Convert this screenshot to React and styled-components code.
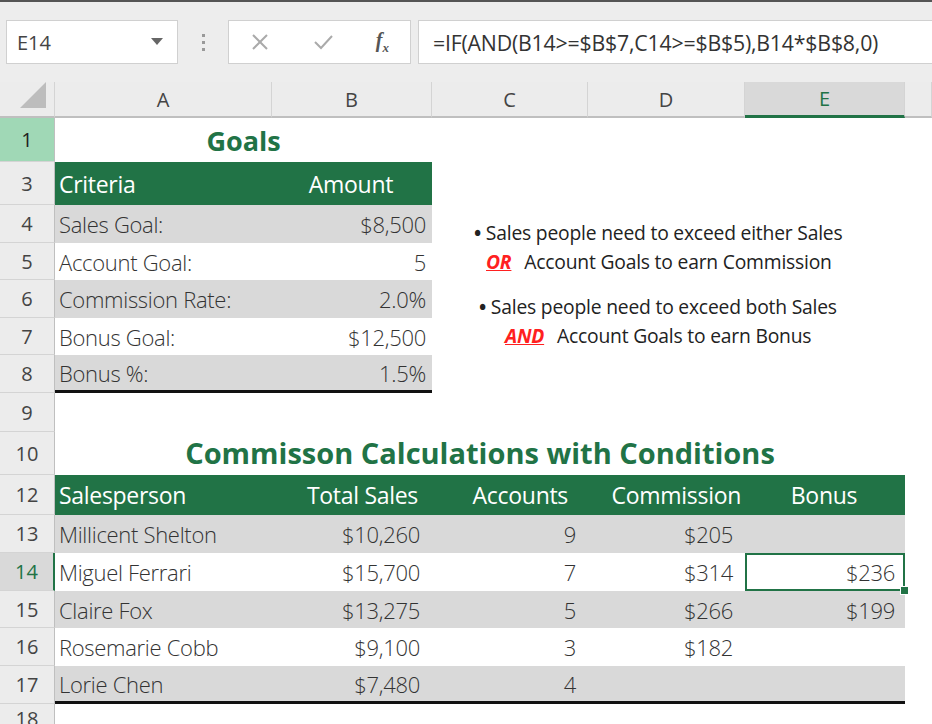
import React from "react";
import styled, { createGlobalStyle } from "styled-components";

const G = createGlobalStyle`
  html,body{margin:0;padding:0;background:#fff;}
  body{font-family:"Open Sans","Noto Sans",sans-serif;overflow:hidden;}
`;
const Page = styled.div`width:932px;height:724px;position:relative;overflow:hidden;background:#fff;`;
const Toolbar = styled.div`height:82px;background:#ededed;border-top:2px solid #555;box-sizing:border-box;display:flex;align-items:center;padding:0 0 0 6px;`;
const Box = styled.div`height:44px;box-sizing:border-box;background:#fff;border:1px solid #d0d0d0;display:flex;align-items:center;`;
const NameBox = styled(Box)`width:172px;justify-content:space-between;padding:0 14px 0 10px;font-size:20px;color:#444;`;
const Dots = styled.div`width:50px;display:flex;flex-direction:column;align-items:center;gap:4px;`;
const Dot = styled.span`width:3px;height:3px;background:#999;`;
const FnBox = styled(Box)`width:183px;justify-content:space-around;color:#aaa;font-size:24px;`;
const Formula = styled(Box)`flex:1;margin-left:7px;padding-left:14px;font-size:21.3px;color:#333;white-space:nowrap;border-right:none;letter-spacing:-0.2px;`;
const Grid = styled.div`display:grid;grid-template-columns:55px 217px 160px 156px 157px 160px 27px;
  grid-template-rows:36px 44px 43px 38px 37px 38px 37px 38px 39px 43px 40px 38px 38px 37px 38px 38px 30px;`;
const ColHead = styled.div`background:#ececec;border-right:1px solid #d4d4d4;border-bottom:2px solid #bfbfbf;
  display:flex;align-items:center;justify-content:center;font-size:20px;color:#444;
  ${p=>p.sel&&"background:#d9d9d9;border-bottom:3px solid #217346;color:#217346;"}`;
const Corner = styled(ColHead)`position:relative;`;
const RowHead = styled.div`background:#ececec;border-right:1px solid #bfbfbf;border-bottom:1px solid #d4d4d4;
  display:flex;align-items:center;justify-content:center;font-size:20px;color:#444;
  ${p=>p.sel&&"background:#a0d8b6;color:#222;"}${p=>p.cur&&"background:#d9d9d9;color:#217346;border-right:2px solid #217346;"}`;
const Cell = styled.div`display:flex;align-items:center;padding:0 6px 0 4px;font-size:22px;color:#333;letter-spacing:-0.3px;
  font-family:"Open Sans",sans-serif;font-weight:300;
  justify-content:${p=>p.r?"flex-end":"flex-start"};
  background:${p=>p.head?"#217346":p.gray?"#d9d9d9":"#fff"};
  ${p=>p.head&&"color:#fff;font-weight:400;font-size:23px;"}
  ${p=>p.thick&&"border-bottom:3px solid #111;"}
  ${p=>p.sel&&"outline:2px solid #217346;outline-offset:-2px;position:relative;"}`;
const Title = styled.div`grid-column:${p=>p.span};display:flex;align-items:flex-end;justify-content:center;padding-bottom:3px;
  color:#217346;font-weight:700;font-size:${p=>p.size}px;white-space:nowrap;`;
const Handle = styled.span`position:absolute;right:-4px;bottom:-4px;width:7px;height:7px;background:#217346;border:1px solid #fff;`;
const Note = styled.div`position:absolute;left:470px;top:218px;font-family:"Open Sans",sans-serif;font-size:19.3px;color:#222;line-height:29px;white-space:nowrap;letter-spacing:-0.2px;`;
const Para = styled.p`margin:0 0 16px;padding-left:${p=>p.ind}px;`;
const Red = styled.b`color:#ff2020;font-style:italic;text-decoration:underline;margin-right:8px;`;

const goals=[["Criteria","Amount"],["Sales Goal:","$8,500"],["Account Goal:","5"],["Commission Rate:","2.0%"],["Bonus Goal:","$12,500"],["Bonus %:","1.5%"]];
const sales=[["Millicent Shelton","$10,260","9","$205",""],["Miguel Ferrari","$15,700","7","$314","$236"],["Claire Fox","$13,275","5","$266","$199"],["Rosemarie Cobb","$9,100","3","$182",""],["Lorie Chen","$7,480","4","",""]];

export default function App(){
  const cells=[];
  cells.push(<Corner key="c"><svg width="30" height="30" style={{position:"absolute",right:6,bottom:6}}><polygon points="28,2 28,28 2,28" fill="#bdbdbd"/></svg></Corner>);
  ["A","B","C","D","E",""].forEach((c,i)=>cells.push(<ColHead key={"h"+i} sel={c==="E"}>{c}</ColHead>));
  cells.push(<RowHead key="r1" sel>1</RowHead>,<Title key="t1" span="2 / 4" size={27}>Goals</Title>,<div key="e1" style={{gridColumn:"4 / 8"}}/>);
  goals.forEach((g,i)=>{
    cells.push(<RowHead key={"gr"+i}>{i+3}</RowHead>,
      <Cell key={"ga"+i} head={i===0} gray={i%2===1} thick={i===5}>{g[0]}</Cell>,
      <Cell key={"gb"+i} r head={i===0} gray={i%2===1} thick={i===5} style={i===0?{justifyContent:"center"}:undefined}>{g[1]}</Cell>,
      <div key={"ge"+i} style={{gridColumn:"4 / 8"}}/>);
  });
  cells.push(<RowHead key="r9">9</RowHead>,<div key="e9" style={{gridColumn:"2 / 8"}}/>);
  cells.push(<RowHead key="r10">10</RowHead>,<Title key="t10" span="2 / 7" size={29}>Commisson Calculations with Conditions</Title>,<div key="e10"/>);
  cells.push(<RowHead key="r12">12</RowHead>);
  ["Salesperson","Total Sales","Accounts","Commission","Bonus"].forEach((h,i)=>cells.push(<Cell key={"sh"+i} head r={i>0} style={i===0?undefined:{justifyContent:i===4?"center":"flex-end",paddingRight:i===1?14:i===2?20:i===3?4:6}}>{h}</Cell>));
  cells.push(<div key="s12"/>);
  sales.forEach((s,i)=>{
    const gray=i%2===0, thick=i===4;
    cells.push(<RowHead key={"sr"+i} cur={i===1}>{i+13}</RowHead>);
    s.forEach((v,j)=>cells.push(<Cell key={"s"+i+j} r={j>0} gray={gray} thick={thick} sel={i===1&&j===4} style={j>0?{paddingRight:j===4?10:12}:undefined}>{v}{i===1&&j===4&&<Handle/>}</Cell>));
    cells.push(<div key={"sx"+i}/>);
  });
  cells.push(<RowHead key="r18">18</RowHead>,<div key="e18" style={{gridColumn:"2 / 8"}}/>);
  return <Page><G/>
    <Toolbar>
      <NameBox>E14<svg width="12" height="8"><polygon points="0,0 12,0 6,7" fill="#666"/></svg></NameBox>
      <Dots><Dot/><Dot/><Dot/></Dots>
      <FnBox>
        <svg width="20" height="20"><path d="M3 3L17 17M17 3L3 17" stroke="#aaa" strokeWidth="2"/></svg>
        <svg width="22" height="20"><path d="M3 10L9 16L20 4" stroke="#aaa" strokeWidth="2" fill="none"/></svg>
        <span style={{fontFamily:"Liberation Serif,serif",fontStyle:"italic",fontWeight:700,color:"#555",fontSize:20}}>f<sub style={{fontSize:13}}>x</sub></span>
      </FnBox>
      <Formula>=IF(AND(B14&gt;=$B$7,C14&gt;=$B$5),B14*$B$8,0)</Formula>
    </Toolbar>
    <Grid>{cells}</Grid>
    <Note>
      <Para ind={4}><b>•</b> Sales people need to exceed either Sales<br/><span style={{paddingLeft:12}}><Red>OR</Red> Account Goals to earn Commission</span></Para>
      <Para ind={9}><b>•</b> Sales people need to exceed both Sales<br/><span style={{paddingLeft:26}}><Red>AND</Red> Account Goals to earn Bonus</span></Para>
    </Note>
  </Page>;
}
